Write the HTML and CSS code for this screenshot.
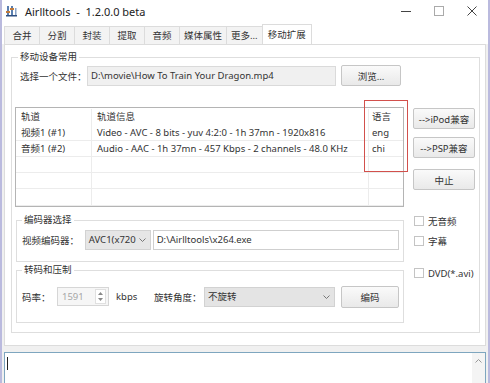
FILE: index.html
```html
<!DOCTYPE html>
<html lang="zh">
<head>
  <meta charset="UTF-8">
  <title>Airlltools</title>
  <link rel="stylesheet" href="styles.css">
</head>
<body>
  <div class="window">
    <div class="titlebar">
      <svg class="app-icon" width="11" height="12" viewBox="0 0 11 12">
        <rect x="1" y="1" width="2" height="10" fill="#5a7fb0"/>
        <rect x="5" y="1" width="2" height="10" fill="#5a7fb0"/>
        <rect x="9" y="3" width="1.5" height="8" fill="#8aa4c8"/>
        <rect x="0" y="6" width="4" height="2" fill="#c07a3a"/>
        <rect x="4" y="3" width="4" height="2" fill="#c07a3a"/>
        <rect x="0" y="10" width="11" height="1.5" fill="#2f4f80"/>
      </svg>
      <span class="title">Airlltools &nbsp;- &nbsp;1.2.0.0 beta</span>
      <div class="controls">
        <span><svg width="10" height="10" viewBox="0 0 10 10"><line x1="0" y1="5.5" x2="10" y2="5.5" stroke="#444" stroke-width="1"/></svg></span>
        <span><svg width="10" height="10" viewBox="0 0 10 10"><rect x="0.5" y="0.5" width="9" height="9" fill="none" stroke="#aaa" stroke-width="1"/></svg></span>
        <span><svg width="10" height="10" viewBox="0 0 10 10"><path d="M0.5 0.5 L9.5 9.5 M9.5 0.5 L0.5 9.5" stroke="#444" stroke-width="1"/></svg></span>
      </div>
    </div>

    <div class="tabs">
      <span class="tab">合并</span>
      <span class="tab">分割</span>
      <span class="tab">封装</span>
      <span class="tab">提取</span>
      <span class="tab">音频</span>
      <span class="tab">媒体属性</span>
      <span class="tab">更多...</span>
      <span class="tab active">移动扩展</span>
    </div>

    <div class="panel">
      <fieldset class="group main-group">
        <legend>移动设备常用</legend>

        <div class="file-row">
          <span class="file-label">选择一个文件：</span>
          <div class="input readonly file-input">D:\movie\How To Train Your Dragon.mp4</div>
          <button class="btn browse">浏览...</button>
        </div>

        <div class="main">
          <div class="left">
            <div class="track-table">
              <div class="row head">
                <span class="c1">轨道</span><span class="c2">轨道信息</span><span class="c3">语言</span>
              </div>
              <div class="row">
                <span class="c1">视频1 (#1)</span><span class="c2">Video - AVC - 8 bits - yuv 4:2:0 - 1h 37mn - 1920x816</span><span class="c3">eng</span>
              </div>
              <div class="row">
                <span class="c1">音频1 (#2)</span><span class="c2">Audio - AAC - 1h 37mn - 457 Kbps - 2 channels - 48.0 KHz</span><span class="c3">chi</span>
              </div>
              <div class="row"><span class="c1"></span><span class="c2"></span><span class="c3"></span></div>
              <div class="row"><span class="c1"></span><span class="c2"></span><span class="c3"></span></div>
              <div class="row last"><span class="c1"></span><span class="c2"></span><span class="c3"></span></div>
            </div>

            <fieldset class="group sub encoder">
              <legend>编码器选择</legend>
              <div class="form-row">
                <span class="row-label">视频编码器：</span>
                <div class="select codec">AVC1(x720<svg class="chev" width="7" height="4" viewBox="0 0 7 4"><path d="M0.5 0.5 L3.5 3.5 L6.5 0.5" fill="none" stroke="#777"/></svg></div>
                <div class="input exe">D:\Airlltools\x264.exe</div>
              </div>
            </fieldset>

            <fieldset class="group sub transcode">
              <legend>转码和压制</legend>
              <div class="form-row">
                <span class="row-label">码率：</span>
                <div class="spin">
                  <span class="spin-val">1591</span>
                  <span class="spin-btns">
                    <svg width="5" height="3" viewBox="0 0 5 3"><path d="M0 3 L2.5 0 L5 3Z" fill="#888"/></svg>
                    <svg width="5" height="3" viewBox="0 0 5 3"><path d="M0 0 L2.5 3 L5 0Z" fill="#888"/></svg>
                  </span>
                </div>
                <span class="unit">kbps</span>
                <span class="rotate-label">旋转角度：</span>
                <div class="select rotate">不旋转<svg class="chev" width="7" height="4" viewBox="0 0 7 4"><path d="M0.5 0.5 L3.5 3.5 L6.5 0.5" fill="none" stroke="#777"/></svg></div>
                <button class="btn encode">编码</button>
              </div>
            </fieldset>
          </div>

          <div class="right">
            <button class="btn side ipod">--&gt;iPod兼容</button>
            <button class="btn side psp">--&gt;PSP兼容</button>
            <button class="btn side stop">中止</button>
            <label class="check first"><span class="box"></span>无音频</label>
            <label class="check"><span class="box"></span>字幕</label>
            <label class="check dvd"><span class="box"></span>DVD(*.avi)</label>
          </div>

          <div class="highlight"></div>
        </div>
      </fieldset>
    </div>

    <div class="log">
      <span class="caret"></span>
      <div class="scroll">
        <svg width="7" height="4" viewBox="0 0 7 4"><path d="M0.5 3.5 L3.5 0.5 L6.5 3.5" fill="none" stroke="#999"/></svg>
      </div>
    </div>
  </div>
</body>
</html>
```

FILE: styles.css
```css
* {
  box-sizing: border-box;
}
body {
  margin: 0;
  width: 490px;
  height: 383px;
  overflow: hidden;
  background: #f0f0f0;
  font-family: "Noto Sans", "Noto Sans CJK SC", sans-serif;
  font-size: 9.5px;
  color: #333;
}
.window {
  height: 383px;
  border-left: 2px solid #babade;
  border-right: 2px solid #babade;
  display: flex;
  flex-direction: column;
}
.titlebar {
  height: 22px;
  background: white;
  display: flex;
  align-items: center;
  flex-shrink: 0;
}
.app-icon {
  margin-left: 4px;
}
.title {
  margin-left: 8px;
  font-size: 11px;
  color: #222;
}
.controls {
  margin-left: auto;
  display: flex;
}
.controls span {
  width: 33px;
  display: flex;
  justify-content: center;
}
.tabs {
  height: 22px;
  display: flex;
  align-items: flex-end;
  padding-left: 2px;
  background: white;
  flex-shrink: 0;
}
.tab {
  height: 18px;
  line-height: 17px;
  min-width: 36px;
  padding: 0 4px;
  text-align: center;
  border: 1px solid #dcdcdc;
  border-bottom: none;
  margin-right: -1px;
  background: #f3f3f3;
  color: #333;
}
.tab.active {
  height: 20px;
  line-height: 19px;
  background: white;
  padding: 0 5px;
  position: relative;
  z-index: 1;
}
.panel {
  height: 302px;
  margin: 0 2px;
  background: white;
  border: 1px solid #dcdcdc;
  flex-shrink: 0;
}
.group {
  border: 1px solid #dedede;
  margin: 0;
  min-width: 0;
}
.group legend {
  padding: 0 2px;
  margin-left: 3px;
  line-height: 14px;
  color: #333;
}
.main-group {
  margin: 5px 5px 0 6px;
  padding: 1px 2px 9px 3px;
}
.file-row {
  display: flex;
  align-items: center;
  height: 21px;
}
.file-label {
  width: 72px;
  padding-left: 5px;
  white-space: nowrap;
}
.input {
  height: 20px;
  line-height: 18px;
  border: 1px solid #cfcfcf;
  padding: 0 3px;
  white-space: nowrap;
  overflow: hidden;
}
.input.readonly {
  background: #f0f0f0;
  border-color: #dadada;
}
.file-input {
  width: 249px;
}
.btn {
  font-family: inherit;
  font-size: 9.5px;
  color: #333;
  background: linear-gradient(#fafafa, #e9e9e9);
  border: 1px solid #c6c6c6;
  border-radius: 2px;
  padding: 0;
}
.browse {
  width: 60px;
  height: 21px;
  margin-left: 5px;
}
.main {
  position: relative;
  display: grid;
  grid-template-columns: 389px 61px;
  column-gap: 9px;
  margin-top: 21px;
}
.track-table {
  border: 1px solid #b4b4b4;
  height: 100px;
  padding-top: 1px;
}
.row {
  display: flex;
  height: 16px;
  line-height: 15px;
}
.row span {
  padding-left: 5px;
  white-space: nowrap;
  overflow: hidden;
  border-bottom: 1px solid #ececec;
}
.row.head span {
  border-bottom: none;
}
.row.last span {
  height: 17px;
}
.c1 {
  width: 76px;
  border-right: 1px solid #ececec;
}
.c2 {
  width: 277px;
  border-right: 1px solid #ececec;
}
.c3 {
  flex: 1;
  padding-left: 3px !important;
}
.sub {
  margin-left: 1px;
  padding: 0 4px 0 5px;
}
.sub legend {
  margin-left: 0;
}
.encoder {
  margin-top: 6px;
  padding-bottom: 11px;
}
.transcode {
  margin-top: 1px;
  padding-bottom: 15px;
}
.form-row {
  display: flex;
  align-items: center;
  margin-top: 2px;
  height: 21px;
}
.transcode .form-row {
  margin-top: 9px;
}
.row-label {
  width: 63px;
  white-space: nowrap;
}
.transcode .row-label {
  width: 35px;
}
.select {
  height: 20px;
  line-height: 19px;
  background: #e6e6e6;
  border: 1px solid #d2d2d2;
  padding: 0 4px 0 3px;
  display: flex;
  align-items: center;
  justify-content: space-between;
  white-space: nowrap;
}
.codec {
  width: 66px;
}
.exe {
  width: 247px;
  margin-left: 2px;
}
.spin {
  width: 52px;
  height: 19px;
  border: 1px solid #d6d6d6;
  background: #f6f6f6;
  display: flex;
  align-items: center;
  justify-content: space-between;
  padding: 0 2px 0 4px;
}
.spin-val {
  color: #a6a6a6;
}
.spin-btns {
  display: flex;
  flex-direction: column;
  gap: 3px;
  border: 1px solid #e0e0e0;
  padding: 2px 2px;
  background: white;
}
.spin-btns svg {
  display: block;
}
.unit {
  margin-left: 7px;
  width: 38px;
}
.rotate-label {
  width: 50px;
  white-space: nowrap;
}
.rotate {
  width: 131px;
  background: #e4e4e4;
}
.encode {
  width: 58px;
  height: 22px;
  margin-left: 6px;
}
.right {
  display: flex;
  flex-direction: column;
  padding-top: 1px;
}
.side {
  height: 21px;
  width: 62px;
}
.psp {
  margin-top: 8px;
}
.stop {
  margin-top: 11px;
}
.check {
  display: flex;
  align-items: center;
  height: 14px;
  margin-top: 6px;
  white-space: nowrap;
}
.check.first {
  margin-top: 24px;
}
.check.dvd {
  margin-top: 18px;
}
.box {
  width: 10px;
  height: 10px;
  border: 1px solid #c4c4c4;
  background: white;
  margin-right: 4px;
  margin-left: 1px;
}
.highlight {
  position: absolute;
  left: 349px;
  top: -7px;
  width: 44px;
  height: 72px;
  border: 1px solid #d2504c;
}
.log {
  margin: 6px 2px 0;
  flex: 1;
  background: white;
  border: 1px solid #7ea6bf;
  border-bottom: none;
  display: flex;
  justify-content: space-between;
}
.caret {
  width: 1px;
  height: 13px;
  background: #222;
  margin: 4px 0 0 2px;
}
.scroll {
  width: 13px;
  background: #f4f4f4;
  display: flex;
  justify-content: center;
  padding-top: 6px;
}
.scroll svg {
  display: block;
}
```
